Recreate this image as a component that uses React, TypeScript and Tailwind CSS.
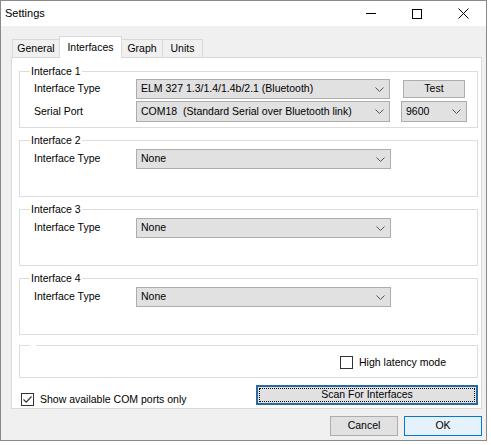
import React from "react";

function Chevron() {
  return (
    <svg width="9" height="5" viewBox="0 0 9 5" className="shrink-0">
      <polyline points="0.5,0.5 4.5,4.5 8.5,0.5" fill="none" stroke="#555" strokeWidth="1" />
    </svg>
  );
}

function Combo({ value, className }: { value: string; className: string }) {
  return (
    <div
      className={`flex items-center justify-between border border-[#adadad] bg-[#e1e1e1] pl-[4px] pr-[5px] whitespace-pre ${className}`}
    >
      <span>{value}</span>
      <Chevron />
    </div>
  );
}

function CheckBox({ checked }: { checked: boolean }) {
  return (
    <span className="flex h-[13px] w-[13px] shrink-0 items-center justify-center border border-[#333] bg-white">
      {checked && (
        <svg width="11" height="11" viewBox="0 0 11 11">
          <polyline points="1.5,5.5 4.2,8.2 9.5,2.5" fill="none" stroke="#333" strokeWidth="1.2" />
        </svg>
      )}
    </span>
  );
}

function GroupBox({
  title,
  className,
  children,
}: {
  title?: string;
  className: string;
  children?: React.ReactNode;
}) {
  return (
    <div className={`relative border border-[#dcdcdc] ${className}`}>
      {/* caption sits over the top border */}
      <span className="absolute -top-[7px] left-[10px] bg-white px-[1px] leading-[13px]">
        {title ?? <span className="inline-block w-[4px]" />}
      </span>
      {children}
    </div>
  );
}

function TypeRow({ className }: { className: string }) {
  return (
    <div className={`flex items-center pl-[14px] ${className}`}>
      <span className="w-[102px]">Interface Type</span>
      <Combo value="None" className="h-[20px] w-[255px]" />
    </div>
  );
}

const tabs = ["General", "Interfaces", "Graph", "Units"];
const tabWidths: Record<string, string> = {
  General: "w-[48px]",
  Interfaces: "w-[63px]",
  Graph: "w-[42px]",
  Units: "w-[41px]",
};

export default function App() {
  return (
    <div className="h-[445px] w-[491px] bg-white font-['Liberation_Sans',Arial,sans-serif] text-[10.5px] text-black">
      <div className="flex h-[441px] w-[487px] flex-col border border-[#8a8a8a] bg-[#f0f0f0]">
        {/* Title bar */}
        <div className="flex h-[25px] items-center bg-white">
          <span className="pl-[4px] text-[11px]">Settings</span>
          <div className="ml-auto flex h-full">
            <div className="flex w-[46px] items-center justify-center">
              <span className="h-px w-[10px] bg-black" />
            </div>
            <div className="flex w-[46px] items-center justify-center">
              <span className="h-[10px] w-[10px] border border-black" />
            </div>
            <div className="flex w-[46px] items-center justify-center">
              <svg width="11" height="11" viewBox="0 0 11 11">
                <line x1="0.5" y1="0.5" x2="10.5" y2="10.5" stroke="#000" strokeWidth="1" />
                <line x1="10.5" y1="0.5" x2="0.5" y2="10.5" stroke="#000" strokeWidth="1" />
              </svg>
            </div>
          </div>
        </div>

        {/* Body */}
        <div className="flex flex-1 flex-col pl-[10px] pt-[10px]">
          {/* Tabs */}
          <div className="flex h-[21px] items-end pl-[1px]">
            {tabs.map((t) =>
              t === "Interfaces" ? (
                <div
                  key={t}
                  className={`relative z-10 -mb-px -ml-px flex h-[22px] items-start justify-center border border-b-0 border-[#d9d9d9] bg-white pt-[3px] ${tabWidths[t]}`}
                >
                  {t}
                </div>
              ) : (
                <div
                  key={t}
                  className={`-ml-px flex h-[18px] items-center justify-center border border-b-0 border-[#d9d9d9] bg-[#f0f0f0] first:ml-0 ${tabWidths[t]}`}
                >
                  {t}
                </div>
              )
            )}
          </div>

          {/* Tab page */}
          <div className="flex h-[352px] w-[471px] flex-col border border-[#d9d9d9] bg-white pl-[7px] pr-[3px]">
            <GroupBox title="Interface 1" className="mt-[13px] h-[57px]">
              <div className="mt-[7px] flex h-[20px] items-center pl-[14px]">
                <span className="w-[102px]">Interface Type</span>
                <Combo value="ELM 327 1.3/1.4/1.4b/2.1 (Bluetooth)" className="h-[20px] w-[254px]" />
                <div className="ml-[13px] flex h-[18px] w-[62px] items-center justify-center border border-[#adadad] bg-[#e1e1e1]">
                  Test
                </div>
              </div>
              <div className="mt-[2px] flex h-[21px] items-center pl-[14px]">
                <span className="w-[102px]">Serial Port</span>
                <Combo
                  value="COM18  (Standard Serial over Bluetooth link)"
                  className="h-[21px] w-[254px]"
                />
                <Combo value="9600" className="ml-[11px] h-[21px] w-[66px]" />
              </div>
            </GroupBox>

            <GroupBox title="Interface 2" className="mt-[12px] h-[57px]">
              <TypeRow className="mt-[8px]" />
            </GroupBox>
            <GroupBox title="Interface 3" className="mt-[12px] h-[57px]">
              <TypeRow className="mt-[8px]" />
            </GroupBox>
            <GroupBox title="Interface 4" className="mt-[12px] h-[57px]">
              <TypeRow className="mt-[8px]" />
            </GroupBox>

            <GroupBox className="mt-[10px] h-[33px]">
              <div className="mt-[10px] flex items-center justify-end gap-[6px] pr-[31px]">
                <CheckBox checked={false} />
                <span className="leading-[13px]">High latency mode</span>
              </div>
            </GroupBox>

            <div className="mt-[7px] flex items-start justify-between">
              <div className="mt-[8px] flex items-center gap-[6px] pl-[2px]">
                <CheckBox checked />
                <span className="leading-[13px]">Show available COM ports only</span>
              </div>
              <div className="h-[20px] w-[222px] border-2 border-[#2a6aa3] bg-[#e1e1e1] p-px">
                <div className="flex h-full items-center justify-center border border-dotted border-black">
                  Scan For Interfaces
                </div>
              </div>
            </div>
          </div>

          {/* Dialog buttons */}
          <div className="mt-[7px] flex w-[471px] justify-end gap-[6px]">
            <div className="flex h-[20px] w-[68px] items-center justify-center border border-[#adadad] bg-[#e1e1e1]">
              Cancel
            </div>
            <div className="flex h-[20px] w-[78px] items-center justify-center border border-[#0078d7] bg-[#e5f1fb]">
              OK
            </div>
          </div>
        </div>
      </div>
    </div>
  );
}
